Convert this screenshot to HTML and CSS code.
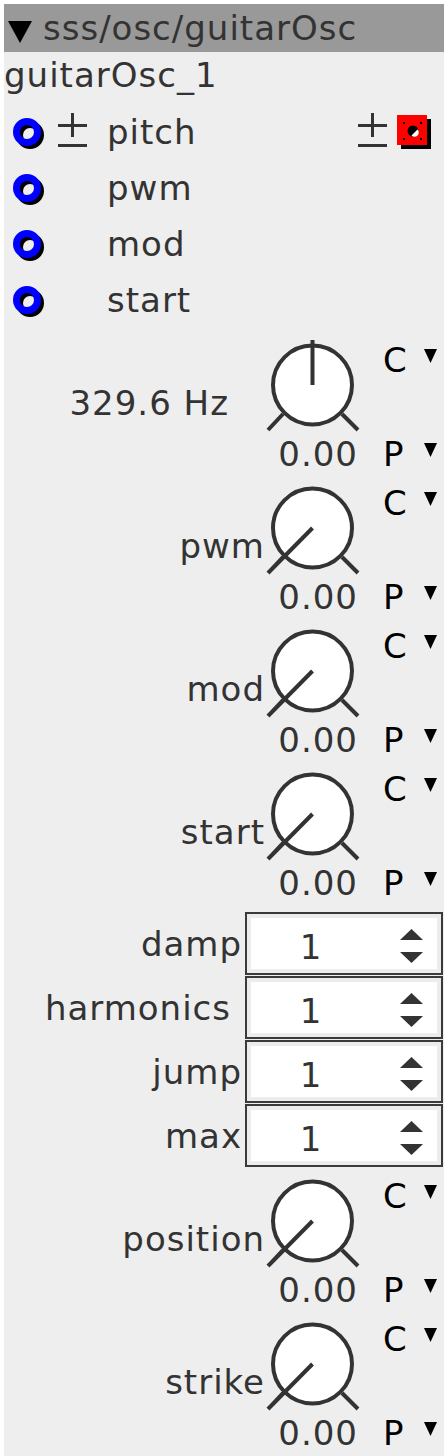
FILE: index.html
```html
<!DOCTYPE html>
<html lang="en">
<head>
    <meta charset="UTF-8">
    <meta name="viewport" content="width=device-width, initial-scale=1.0">
    <title>sss/osc/guitarOsc</title>
    <link rel="stylesheet" href="styles.css">
</head>
<body>
    <div class="panel">
        <div class="header">
            <svg class="header-tri" width="24" height="22" viewBox="0 0 24 22"><polygon points="0,0 24,0 12,22"/></svg>
            <span class="header-title">sss/osc/guitarOsc</span>
        </div>
        <div class="instance">guitarOsc_1</div>

        <!-- input pins -->
        <div class="pins">
            <div class="pin-row">
                <svg class="pin" width="32" height="32" viewBox="0 0 32 32"><circle class="pin-shadow" cx="17" cy="17" r="10.5"/><circle class="pin-ring" cx="14" cy="14" r="10.5"/></svg>
                <span class="pm"><svg width="29" height="35" viewBox="0 0 29 35"><path d="M14.5 0 V24 M0 12.5 H29 M0 32.5 H29"/></svg></span>
                <span class="pin-label">pitch</span>
                <div class="pin-right">
                    <span class="pm"><svg width="29" height="35" viewBox="0 0 29 35"><path d="M14.5 0 V24 M0 12.5 H29 M0 32.5 H29"/></svg></span>
                    <svg class="out-pin" width="34" height="34" viewBox="0 0 34 34">
                        <rect x="4" y="4" width="30" height="30" fill="#000"/>
                        <rect x="0" y="0" width="30" height="30" fill="#f00"/>
                        <rect x="6" y="7" width="2" height="2" fill="#000"/>
                        <rect x="23" y="7" width="2" height="2" fill="#000"/>
                        <rect x="6" y="23" width="2" height="2" fill="#000"/>
                        <rect x="23" y="23" width="2" height="2" fill="#000"/>
                        <circle cx="16" cy="16" r="5.5" fill="#000"/>
                        <path d="M14.5 20.5 A4 4 0 0 0 20.5 14.5 Z" fill="#fff"/>
                    </svg>
                </div>
            </div>
            <div class="pin-row">
                <svg class="pin" width="32" height="32" viewBox="0 0 32 32"><circle class="pin-shadow" cx="17" cy="17" r="10.5"/><circle class="pin-ring" cx="14" cy="14" r="10.5"/></svg>
                <span class="pm"></span>
                <span class="pin-label">pwm</span>
            </div>
            <div class="pin-row">
                <svg class="pin" width="32" height="32" viewBox="0 0 32 32"><circle class="pin-shadow" cx="17" cy="17" r="10.5"/><circle class="pin-ring" cx="14" cy="14" r="10.5"/></svg>
                <span class="pm"></span>
                <span class="pin-label">mod</span>
            </div>
            <div class="pin-row">
                <svg class="pin" width="32" height="32" viewBox="0 0 32 32"><circle class="pin-shadow" cx="17" cy="17" r="10.5"/><circle class="pin-ring" cx="14" cy="14" r="10.5"/></svg>
                <span class="pm"></span>
                <span class="pin-label">start</span>
            </div>
        </div>

        <!-- knobs -->
        <div class="knob-block first">
            <span class="label freq">329.6 Hz</span>
            <svg class="knob" width="94" height="94" viewBox="0 0 94 94"><circle cx="46.5" cy="45" r="39.5"/><path d="M2 90 L17 74 M76 74 L92 90 M46.5 45 V0"/></svg>
            <div class="cp cp-top"><span class="cp-letter">C</span><svg class="tri" width="13" height="14" viewBox="0 0 13 14"><polygon points="0,0 13,0 6.5,14"/></svg></div>
            <span class="value">0.00</span>
            <div class="cp cp-bottom"><span class="cp-letter">P</span><svg class="tri" width="13" height="14" viewBox="0 0 13 14"><polygon points="0,0 13,0 6.5,14"/></svg></div>
        </div>
        <div class="knob-block">
            <span class="label">pwm</span>
            <svg class="knob" width="94" height="94" viewBox="0 0 94 94"><circle cx="46.5" cy="45" r="39.5"/><path d="M2 90 L17 74 M76 74 L92 90 M46.5 45 L2 90"/></svg>
            <div class="cp cp-top"><span class="cp-letter">C</span><svg class="tri" width="13" height="14" viewBox="0 0 13 14"><polygon points="0,0 13,0 6.5,14"/></svg></div>
            <span class="value">0.00</span>
            <div class="cp cp-bottom"><span class="cp-letter">P</span><svg class="tri" width="13" height="14" viewBox="0 0 13 14"><polygon points="0,0 13,0 6.5,14"/></svg></div>
        </div>
        <div class="knob-block">
            <span class="label">mod</span>
            <svg class="knob" width="94" height="94" viewBox="0 0 94 94"><circle cx="46.5" cy="45" r="39.5"/><path d="M2 90 L17 74 M76 74 L92 90 M46.5 45 L2 90"/></svg>
            <div class="cp cp-top"><span class="cp-letter">C</span><svg class="tri" width="13" height="14" viewBox="0 0 13 14"><polygon points="0,0 13,0 6.5,14"/></svg></div>
            <span class="value">0.00</span>
            <div class="cp cp-bottom"><span class="cp-letter">P</span><svg class="tri" width="13" height="14" viewBox="0 0 13 14"><polygon points="0,0 13,0 6.5,14"/></svg></div>
        </div>
        <div class="knob-block">
            <span class="label">start</span>
            <svg class="knob" width="94" height="94" viewBox="0 0 94 94"><circle cx="46.5" cy="45" r="39.5"/><path d="M2 90 L17 74 M76 74 L92 90 M46.5 45 L2 90"/></svg>
            <div class="cp cp-top"><span class="cp-letter">C</span><svg class="tri" width="13" height="14" viewBox="0 0 13 14"><polygon points="0,0 13,0 6.5,14"/></svg></div>
            <span class="value">0.00</span>
            <div class="cp cp-bottom"><span class="cp-letter">P</span><svg class="tri" width="13" height="14" viewBox="0 0 13 14"><polygon points="0,0 13,0 6.5,14"/></svg></div>
        </div>

        <!-- integer spinners -->
        <div class="spins">
            <div class="spin-row">
                <span class="spin-label">damp</span>
                <div class="spinbox"><span class="spin-value">1</span><svg class="arrows" width="23" height="34" viewBox="0 0 23 34"><polygon points="0,11 11.5,0 23,11"/><polygon points="0,23 23,23 11.5,34"/></svg></div>
            </div>
            <div class="spin-row">
                <span class="spin-label wide">harmonics</span>
                <div class="spinbox"><span class="spin-value">1</span><svg class="arrows" width="23" height="34" viewBox="0 0 23 34"><polygon points="0,11 11.5,0 23,11"/><polygon points="0,23 23,23 11.5,34"/></svg></div>
            </div>
            <div class="spin-row">
                <span class="spin-label">jump</span>
                <div class="spinbox"><span class="spin-value">1</span><svg class="arrows" width="23" height="34" viewBox="0 0 23 34"><polygon points="0,11 11.5,0 23,11"/><polygon points="0,23 23,23 11.5,34"/></svg></div>
            </div>
            <div class="spin-row">
                <span class="spin-label">max</span>
                <div class="spinbox"><span class="spin-value">1</span><svg class="arrows" width="23" height="34" viewBox="0 0 23 34"><polygon points="0,11 11.5,0 23,11"/><polygon points="0,23 23,23 11.5,34"/></svg></div>
            </div>
        </div>

        <div class="knob-block after-spins">
            <span class="label">position</span>
            <svg class="knob" width="94" height="94" viewBox="0 0 94 94"><circle cx="46.5" cy="45" r="39.5"/><path d="M2 90 L17 74 M76 74 L92 90 M46.5 45 L2 90"/></svg>
            <div class="cp cp-top"><span class="cp-letter">C</span><svg class="tri" width="13" height="14" viewBox="0 0 13 14"><polygon points="0,0 13,0 6.5,14"/></svg></div>
            <span class="value">0.00</span>
            <div class="cp cp-bottom"><span class="cp-letter">P</span><svg class="tri" width="13" height="14" viewBox="0 0 13 14"><polygon points="0,0 13,0 6.5,14"/></svg></div>
        </div>
        <div class="knob-block last">
            <span class="label">strike</span>
            <svg class="knob" width="94" height="94" viewBox="0 0 94 94"><circle cx="46.5" cy="45" r="39.5"/><path d="M2 90 L17 74 M76 74 L92 90 M46.5 45 L2 90"/></svg>
            <div class="cp cp-top"><span class="cp-letter">C</span><svg class="tri" width="13" height="14" viewBox="0 0 13 14"><polygon points="0,0 13,0 6.5,14"/></svg></div>
            <span class="value">0.00</span>
            <div class="cp cp-bottom"><span class="cp-letter">P</span><svg class="tri" width="13" height="14" viewBox="0 0 13 14"><polygon points="0,0 13,0 6.5,14"/></svg></div>
        </div>
    </div>
</body>
</html>
```

FILE: styles.css
```css
body {
    margin: 4px;
    background: #fff;
    font-family: 'DejaVu Sans', sans-serif;
    font-size: 34px;
    line-height: 40px;
    letter-spacing: 1px;
    color: #333;
}
.panel {
    width: 440px;
    background: #eee;
    padding-bottom: 1px;
}
.header {
    height: 48px;
    background: #999;
    display: flex;
    align-items: flex-start;
    padding-top: 4px;
    box-sizing: border-box;
}
.header-tri {
    margin: 13px 0 0 4px;
    fill: #000;
}
.header-title {
    margin-left: 11px;
}
.instance {
    height: 52px;
    padding-top: 3px;
    box-sizing: border-box;
}
.pins {
    margin-bottom: 12px;
}
.pin-row {
    height: 56px;
    display: flex;
    align-items: center;
}
.pin {
    margin: 3px 0 0 9px;
    flex-shrink: 0;
}
.pin-ring {
    fill: none;
    stroke: #00f;
    stroke-width: 7;
}
.pin-shadow {
    fill: none;
    stroke: #000;
    stroke-width: 7;
}
.pm {
    width: 29px;
    height: 35px;
    margin-left: 13px;
}
.pm svg {
    display: block;
    margin-top: -2px;
}
.pm path {
    fill: none;
    stroke: #333;
    stroke-width: 3;
}
.pin-label {
    margin-left: 20px;
}
.pin-right {
    margin-left: auto;
    margin-right: 13px;
    display: flex;
    align-items: center;
}
.out-pin {
    margin-left: 10px;
}
.knob-block {
    display: grid;
    grid-template-columns: 1fr 94px 84px;
    grid-template-rows: 43px 51px 42px;
    height: 136px;
    margin-bottom: 7px;
}
.knob-block.last {
    margin-bottom: 0;
}
.knob-block.after-spins {
    margin-top: 9px;
}
.label {
    grid-column: 1;
    grid-row: 2;
    text-align: right;
    padding-right: 1px;
    white-space: nowrap;
}
.label.freq {
    padding-right: 37px;
}
.knob {
    grid-column: 2;
    grid-row: 1 / span 2;
}
.knob circle {
    fill: #fff;
    stroke: #333;
    stroke-width: 4;
}
.knob path {
    fill: none;
    stroke: #333;
    stroke-width: 4;
}
.cp {
    grid-column: 3;
    display: flex;
    align-items: flex-start;
    padding-left: 23px;
    color: #000;
}
.cp-top {
    grid-row: 1;
}
.cp-bottom {
    grid-row: 3;
}
.cp-letter {
    width: 41px;
}
.tri {
    margin-top: 9px;
    fill: #000;
}
.value {
    grid-column: 1 / span 2;
    grid-row: 3;
    text-align: right;
    padding-right: 2px;
}
.spins {
    margin-top: 3px;
    display: flex;
    flex-direction: column;
    gap: 1px;
}
.spin-row {
    display: grid;
    grid-template-columns: 1fr 198px;
    height: 63px;
    margin-right: 1px;
}
.spin-label {
    text-align: right;
    padding: 12px 3px 0 0;
}
.spin-label.wide {
    padding-right: 14px;
}
.spinbox {
    display: flex;
    align-items: flex-start;
    border: 2px solid #3a3a3a;
    background: #fff;
    box-shadow: inset 0 0 0 4px #ececec;
}
.spin-value {
    width: 128px;
    text-align: center;
    padding-top: 13px;
}
.arrows {
    margin: 15px 0 0 25px;
    fill: #333;
}
```
